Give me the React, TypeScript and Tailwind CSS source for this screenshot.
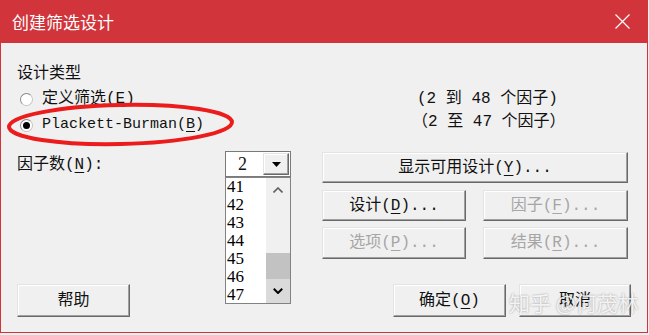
import React from 'react'

const sysFont = "font-['Liberation_Mono','Noto_Sans_CJK_SC',monospace]"

const raised =
  'border border-t-[#e3e3e3] border-l-[#e3e3e3] border-b-[#696969] border-r-[#696969] ' +
  'shadow-[inset_-1px_-1px_0_#a0a0a0,inset_1px_1px_0_#ffffff] bg-[#f0f0f0]'

function Key({ k }: { k: string }) {
  return <span className="underline underline-offset-[3px] decoration-1">{k}</span>
}

function Btn({
  children,
  disabled,
  className,
}: {
  children: React.ReactNode
  disabled?: boolean
  className: string
}) {
  return (
    <div
      className={`flex items-center justify-center text-[16px] leading-none ${raised} ${
        disabled ? 'text-[#a6a6a6]' : 'text-[#111111]'
      } ${className}`}
    >
      {children}
    </div>
  )
}

function Radio({ checked }: { checked?: boolean }) {
  return (
    <div className="w-[13px] h-[13px] rounded-full border border-t-[#8a8a8a] border-l-[#8a8a8a] border-b-[#c4c4c4] border-r-[#c4c4c4] bg-white flex items-center justify-center shrink-0">
      {checked && <div className="w-[7px] h-[7px] rounded-full bg-black" />}
    </div>
  )
}

export default function App() {
  const items = ['41', '42', '43', '44', '45', '46', '47']

  return (
    <div className={`w-[649px] h-[335px] bg-[#f0f0f0] ${sysFont}`}>
      <div className="w-[648px] h-[333px] flex flex-col">
        {/* title bar */}
        <div className="h-[43px] shrink-0 bg-[#d1343a] flex items-center justify-between pl-3 pr-[18px]">
          <span className="font-['Noto_Sans_CJK_SC',sans-serif] text-[17px] text-white leading-none">
            创建筛选设计
          </span>
          <svg width="15" height="15" viewBox="0 0 15 15">
            <path d="M0.5 0.5 L14.5 14.5 M14.5 0.5 L0.5 14.5" stroke="#ffffff" strokeWidth="1.2" />
          </svg>
        </div>

        {/* body */}
        <div className="relative flex-1 flex flex-col border-x border-b border-[#d1343a] bg-[#f0f0f0] pl-4 pt-[21px] pb-[15px] text-[16px] text-[#111111]">
          <div className="flex h-[74px]">
            <div className="w-[305px] flex flex-col">
              <div className="h-[20px] leading-[20px]">设计类型</div>
              <div className="mt-[2px] h-[26px] flex items-center pl-[3px] gap-[9px]">
                <Radio />
                <span className="leading-[20px]">
                  定义筛选(<Key k="E" />)
                </span>
              </div>
              <div className="h-[26px] flex items-center pl-[3px] gap-[9px]">
                <Radio checked />
                <span className="leading-[20px] text-[15px]">
                  Plackett-Burman(<Key k="B" />)
                </span>
              </div>
            </div>
            <div className="flex flex-col pt-[24px]">
              <div className="h-[23px] leading-[23px] ml-[95px]">(2 到 48 个因子)</div>
              <div className="h-[23px] leading-[23px] ml-[90px]">（2 至 47 个因子）</div>
            </div>
          </div>

          <div className="flex mt-[13px]">
            <div className="w-[208px] pt-[4px] leading-[20px]">
              因子数(<Key k="N" />):
            </div>

            <div className="relative w-[66px] h-[26px] border border-[#7a7a7a] bg-white flex">
              <div className="flex-1 flex items-center justify-center pr-1 font-['Liberation_Serif',serif] text-[18px]">
                2
              </div>
              <div className={`w-[26px] my-[1px] mr-[1px] flex items-center justify-center ${raised}`}>
                <svg width="9" height="5" viewBox="0 0 9 5">
                  <path d="M0 0 H9 L4.5 5 Z" fill="#000000" />
                </svg>
              </div>

              {/* open list */}
              <div className="absolute left-[-1px] top-[25px] w-[66px] h-[127px] border border-[#828282] bg-white flex z-10">
                <div className="flex-1 overflow-hidden pl-[1px] font-['Liberation_Serif',serif] text-[17px] text-black">
                  {items.map(n => (
                    <div key={n} className="h-[18px] leading-[18px]">
                      {n}
                    </div>
                  ))}
                </div>
                <div className="w-[24px] bg-[#f0f0f0] flex flex-col">
                  <div className="h-[24px] flex items-center justify-center">
                    <svg width="10" height="6" viewBox="0 0 10 6">
                      <polyline points="0.5,5.5 5,1 9.5,5.5" fill="none" stroke="#606060" strokeWidth="1.6" />
                    </svg>
                  </div>
                  <div className="flex-1 flex flex-col justify-end">
                    <div className="h-[26px] bg-[#c2c2c2]" />
                  </div>
                  <div className="h-[24px] bg-[#dadada] flex items-center justify-center">
                    <svg width="10" height="6" viewBox="0 0 10 6">
                      <polyline points="0.8,0.8 5,5 9.2,0.8" fill="none" stroke="#000000" strokeWidth="2" />
                    </svg>
                  </div>
                </div>
              </div>
            </div>

            <div className="ml-[31px] w-[306px] mt-[1px] flex flex-col">
              <Btn className="h-[31px] w-[306px]">
                显示可用设计(<Key k="Y" />)...
              </Btn>
              <div className="flex mt-[7px] gap-[17px]">
                <Btn className="h-[31px] w-[144px]">
                  设计(<Key k="D" />)...
                </Btn>
                <Btn disabled className="h-[31px] w-[145px]">
                  因子(<Key k="F" />)...
                </Btn>
              </div>
              <div className="flex mt-[6px] gap-[17px]">
                <Btn disabled className="h-[32px] w-[144px]">
                  选项(<Key k="P" />)...
                </Btn>
                <Btn disabled className="h-[32px] w-[145px]">
                  结果(<Key k="R" />)...
                </Btn>
              </div>
            </div>
          </div>

          <div className="mt-auto flex h-[33px]">
            <Btn className="w-[113px] h-[33px]">帮助</Btn>
            <Btn className="ml-[263px] w-[113px] h-[33px]">
              确定(<Key k="O" />)
            </Btn>
            <Btn className="ml-[13px] w-[112px] h-[33px]">取消</Btn>
          </div>

          {/* hand-drawn highlight */}
          <svg
            className="absolute left-0 top-0 pointer-events-none"
            width="260"
            height="130"
            viewBox="0 0 260 130"
          >
            <ellipse
              cx="119.5"
              cy="81.5"
              rx="111.5"
              ry="19.5"
              fill="none"
              stroke="#ec1c1c"
              strokeWidth="4"
              transform="rotate(-1.2 119.5 81.5)"
            />
          </svg>

          {/* watermark */}
          <div className="absolute left-[508px] top-[248px] font-['Noto_Sans_CJK_SC',sans-serif] text-[21px] leading-[22px] text-white/85 [text-shadow:0_0_2px_rgba(0,0,0,0.4)] pointer-events-none whitespace-nowrap">
            知乎 @何茂林
          </div>
        </div>
      </div>
    </div>
  )
}
